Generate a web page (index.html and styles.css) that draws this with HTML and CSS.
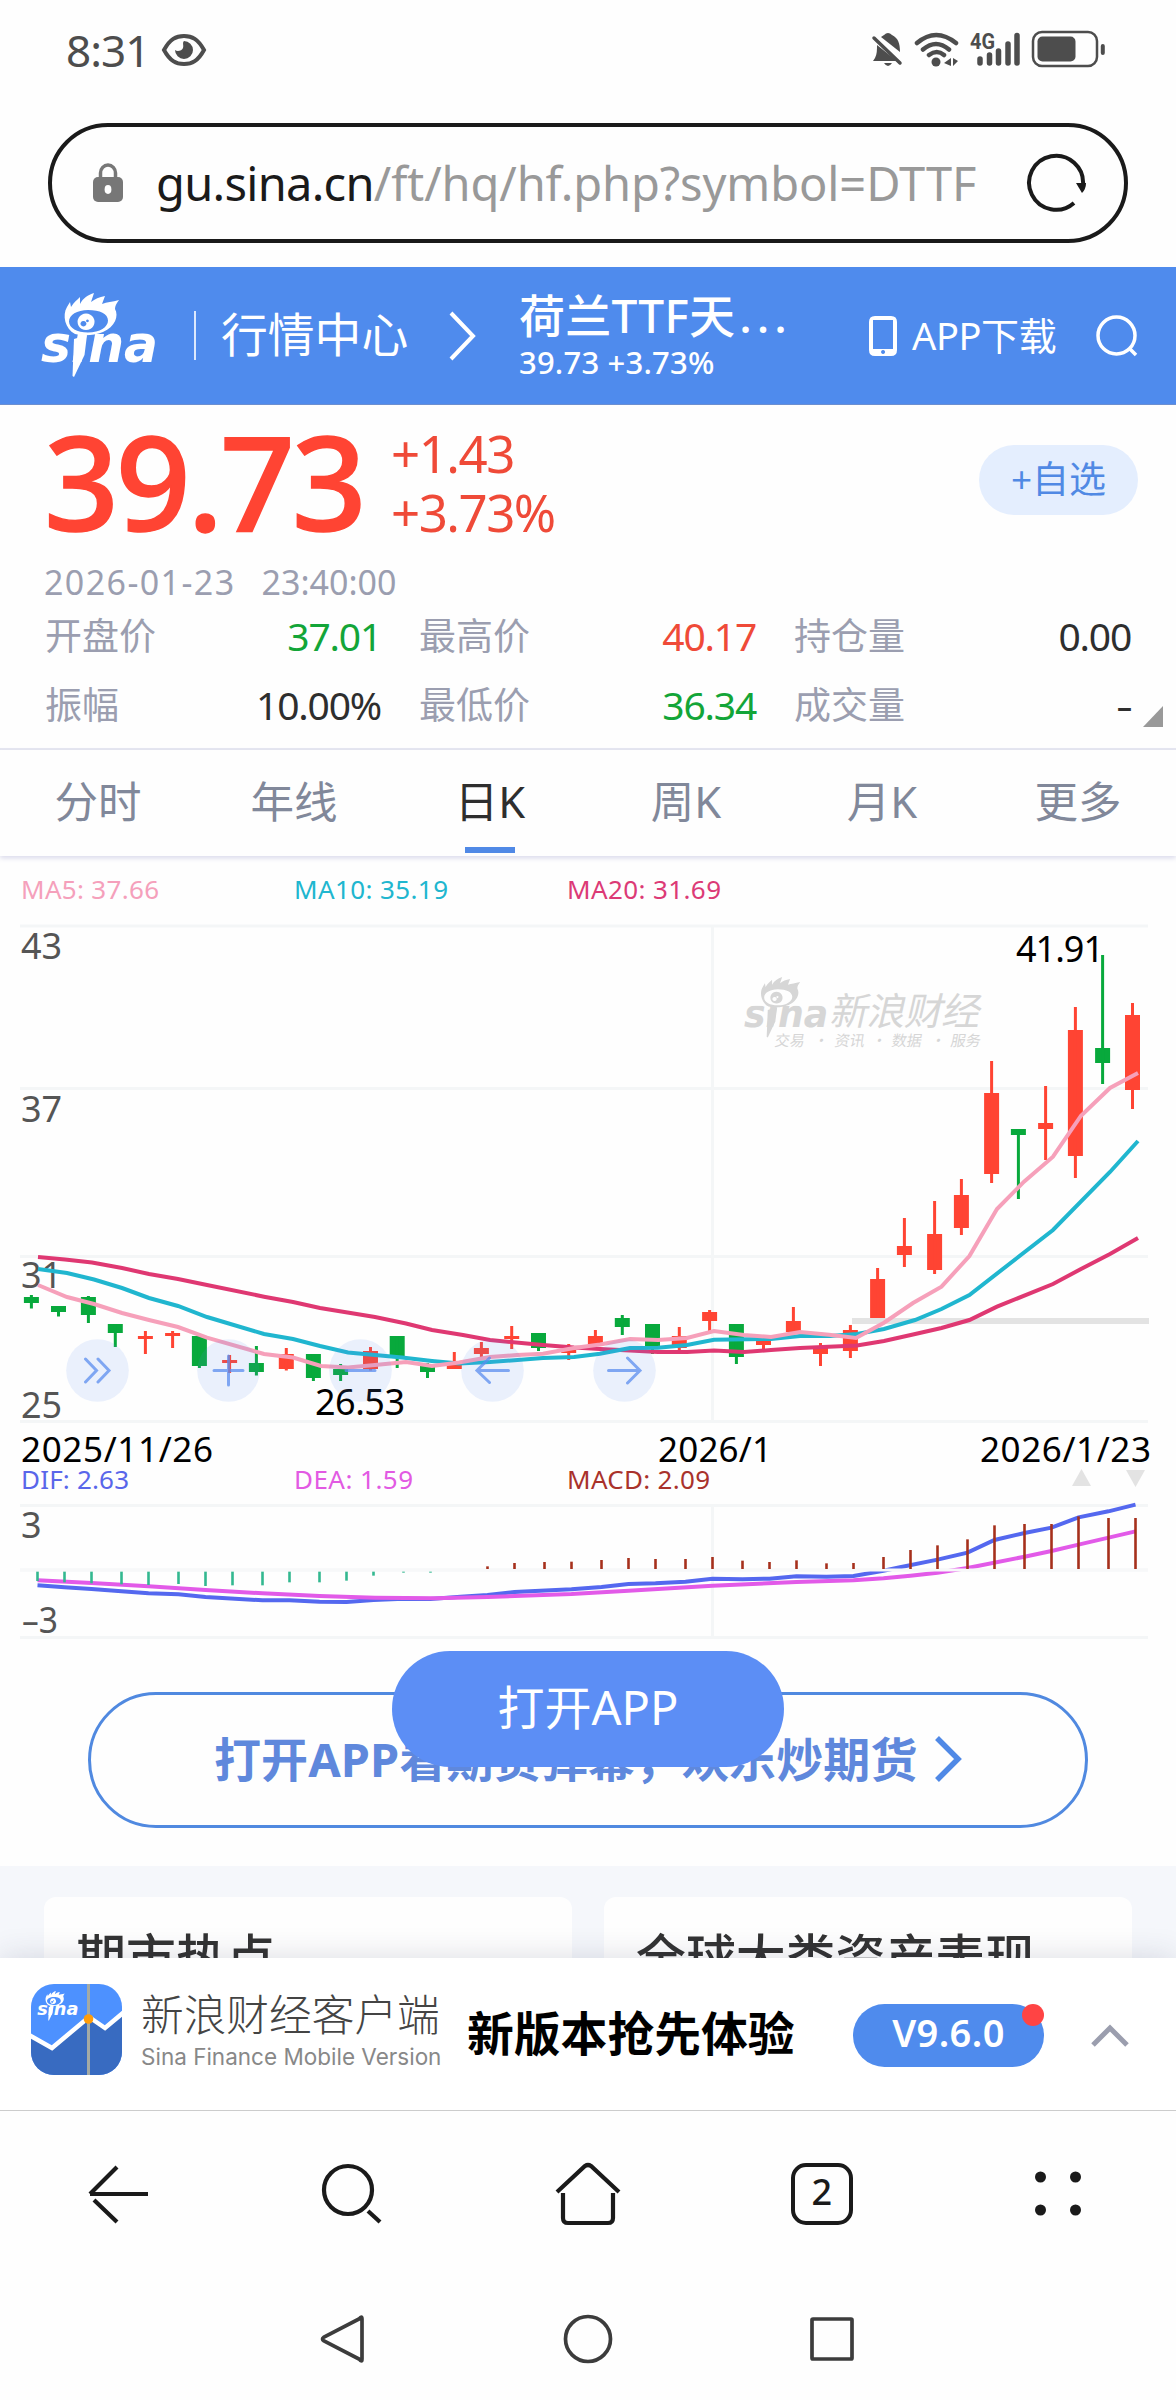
FILE: index.html
```html
<!DOCTYPE html>
<html lang="zh-CN">
<head>
<meta charset="utf-8">
<title>荷兰TTF天然气 行情</title>
<link rel="stylesheet" href="styles.css">
</head>
<body>
<svg width="0" height="0" class="defs" aria-hidden="true">
  <clipPath id="word-clip"><rect x="-4" y="40" width="126" height="45"/></clipPath>
  <symbol id="sina" viewBox="0 0 118 85">
    <path fill="currentColor" fill-rule="evenodd" d="M34 41C24 36 21 22 26 14L29 9L30 14C33 9 36 7 39 4L39 11C42 5 47 2 53 0L50 9C54 6 58 4 64 3L61 11C66 9 71 9 78 7C75 11 74 13 74 16C78 23 74 34 62 39C52 43 42 43 34 41ZM47 17C36 17 28 22 28 28.500C28 35 36 39.500 47 39.500C59 39.500 67 34 67 27.500C67 21 59 17 47 17Z"/>
    <path fill="currentColor" fill-rule="evenodd" d="M45 20.500a8.500 8.300 0 1 0 .1 0ZM42.500 28a3 2.700 0 1 1 -.1 0ZM46.500 26.500a1.400 1.400 0 1 1 -.1 0Z"/>
    <path fill="currentColor" d="M33 46L46 42L43.500 62L33 84L31.500 83Z"/>
    <g clip-path="url(#word-clip)"><text class="sina-word" x="0" y="69" textLength="117" lengthAdjust="spacingAndGlyphs" fill="currentColor">sina</text></g>
  </symbol>
</svg>

<header class="status">
  <div class="status-left">
    <span class="clock">8:31</span>
    <svg width="46" height="34" viewBox="0 0 46 34" fill="none" stroke="#4d4d4d" stroke-width="4"><path d="M3 17C9 6 15 3 23 3S37 6 43 17C37 28 31 31 23 31S9 28 3 17Z"/><path d="M23 8a9 9 0 1 1-9 9c2 2 7 1 8-2s-1-5 1-7Z" fill="#4d4d4d" stroke="none"/></svg>
  </div>
  <svg width="250" height="50" viewBox="865 25 250 50" fill="none" stroke="#4d4d4d" stroke-linecap="round">
    <path d="M884 35q4-4 8 0c6 3 8 8 8 17L881 37ZM877 45l20 16H873l2-3c2-4 2-8 2-13Z" fill="#4d4d4d" stroke="none"/>
    <path d="M874 38L900 63" stroke-width="3.500"/><path d="M884 63h8q-4 6-8 0Z" fill="#4d4d4d" stroke="none"/>
    <path d="M917 43q19-16 39 0M923 49.500q13-11 26 0M929 55q8-6 15 0" stroke-width="4.500"/><circle cx="936" cy="62" r="4.500" fill="#4d4d4d" stroke="none"/>
    <path d="M951 58v8l-7-3ZM953 58v8l5-5Z" fill="#4d4d4d" stroke="none"/>
    <path d="M980 59v4M989.500 55v8M998.500 51v12M1008 44v19M1017 35.500v27.500" stroke-width="5.500"/>
    <text class="net" x="970" y="49" textLength="25" lengthAdjust="spacingAndGlyphs">4G</text>
    <rect x="1033" y="32" width="64" height="34" rx="9" stroke-width="2.500"/><rect x="1037.500" y="36.500" width="38" height="25" rx="5" fill="#4d4d4d" stroke="none"/><path d="M1102.800 46v7" stroke-width="4"/>
  </svg>
</header>

<div class="address">
  <svg class="lock" width="30" height="40" viewBox="0 0 30 40"><path d="M7.500 16v-6a7.500 8 0 0 1 15 0v6" fill="none" stroke="#777" stroke-width="3.500"/><rect y="14" width="30" height="25" rx="5" fill="#777"/><ellipse cx="15" cy="26.500" rx="3.400" ry="4.400" fill="#fff"/></svg>
  <span class="url"><b>gu.sina.cn</b><i>/ft/hq/hf.php?symbol=DTTF</i></span>
  <svg width="62" height="62" viewBox="0 0 62 62"><path d="M48 51A27 27 0 1 1 57 33" fill="none" stroke="#1a1a1a" stroke-width="4"/><path d="M50 31h10q0 6-4 10Z" fill="#1a1a1a"/></svg>
</div>

<nav class="topbar">
  <svg class="logo" width="118" height="85"><use href="#sina"/></svg>
  <span class="bar"></span>
  <span class="center-link">行情中心</span>
  <svg class="crumb" width="28" height="50" viewBox="0 0 28 50"><path d="M3 2L25 25L3 48" fill="none" stroke="#fff" stroke-width="4"/></svg>
  <div class="name"><strong>荷兰TTF天<i>...</i></strong><span>39.73 +3.73%</span></div>
  <svg class="phone" width="28" height="40" viewBox="0 0 28 40"><path fill="#fff" fill-rule="evenodd" d="M6 0H22Q28 0 28 6V34Q28 40 22 40H6Q0 40 0 34V6Q0 0 6 0ZM4 4V33H24V4ZM14 34a2 2 0 1 0 .1 0Z"/></svg>
  <span class="download">APP下载</span>
  <svg width="42" height="42" viewBox="0 0 42 42" fill="none" stroke="#fff" stroke-width="3.500"><circle cx="20.500" cy="20.500" r="18.500"/><path d="M33 33l7 7"/></svg>
</nav>

<section class="quote">
  <div class="price-row">
    <div class="price">39.73</div>
    <div class="change"><span>+1.43</span><span>+3.73%</span></div>
    <button class="add">+自选</button>
  </div>
  <div class="time"><span>2026-01-23</span><span>23:40:00</span></div>
  <dl class="stats">
    <div><dt>开盘价</dt><dd class="down">37.01</dd></div>
    <div><dt>最高价</dt><dd class="up">40.17</dd></div>
    <div><dt>持仓量</dt><dd>0.00</dd></div>
    <div><dt>振幅</dt><dd>10.00%</dd></div>
    <div><dt>最低价</dt><dd class="down">36.34</dd></div>
    <div><dt>成交量</dt><dd class="none">-</dd></div>
  </dl>
  <span class="more-corner"></span>
</section>

<nav class="tabs"><span>分时</span><span>年线</span><span class="active">日K</span><span>周K</span><span>月K</span><span>更多</span></nav>

<svg class="chart" width="1176" height="786" viewBox="0 860 1176 786">
  <g class="legend">
    <text x="21" y="899" textLength="138" fill="#f5a0bb">MA5: 37.66</text>
    <text x="294" y="899" textLength="154" fill="#20b6cf">MA10: 35.19</text>
    <text x="567" y="899" textLength="154" fill="#dc3a76">MA20: 31.69</text>
  </g>
  <path class="grid" d="M20 926H1148M20 1088.500H1148M20 1256.500H1148M20 1421.500H1148M712.500 926V1421M20 1505.500H1148M20 1570H1148M20 1637.500H1148M712.500 1505V1637"/>
  <g class="axis"><text x="21" y="959" textLength="41">43</text><text x="21" y="1122" textLength="41">37</text><text x="21" y="1288" textLength="41">31</text><text x="21" y="1418" textLength="41">25</text><text x="21" y="1538">3</text><text x="22" y="1633" textLength="36" lengthAdjust="spacingAndGlyphs">–3</text></g>
  <g color="#d6d6d6" fill="#d6d6d6">
    <use href="#sina" x="744" y="976" width="85" height="63"/>
    <g class="wm"><text x="0" y="0" font-size="38" transform="translate(829 1025) skewX(-13)" textLength="150">新浪财经</text>
    <text font-size="15" transform="translate(774 1046) skewX(-10)"><tspan x="0">交易</tspan><tspan x="39">·</tspan><tspan x="60">资讯</tspan><tspan x="97">·</tspan><tspan x="117">数据</tspan><tspan x="156">·</tspan><tspan x="176">服务</tspan></text></g>
  </g>
  <path d="M852 1321H1149" stroke="#e3e3e3" stroke-width="6"/>
  <g id="candles"></g>
  <g class="line">
    <polyline stroke="#df3872" points="38,1257 65,1259.500 92,1262.600 122,1268 149,1274 178,1279 207,1285 264,1296.700 293,1302 320,1308 375,1317 406,1323.500 432,1330 463,1335 490,1340 543,1345 574,1347.500 600,1349 630,1350.500 658,1352 687,1352 714,1350.500 744,1352 771,1350 800,1348 857,1345.500 884,1341 913,1334.500 941.500,1328 969.400,1320 997,1306.700 1053,1284 1081,1269 1110,1254 1138,1238"/>
    <polyline stroke="#20b6cf" points="38,1269 67,1273 94,1279.500 122,1288 149,1298 178,1306 207,1317 264,1334 293,1339 320,1346 348,1352.500 375,1355 402,1357.500 432,1361 459,1363.600 490,1362 543,1358 574,1357 600,1353.700 630,1348 658,1347.700 687,1345 714,1339.700 771,1339 800,1336 830,1336 857,1334 884,1329 915,1320 941.500,1309 969.400,1295 1053,1230 1110,1172 1138,1141"/>
    <polyline stroke="#f6a0ba" points="38,1285 67,1297 94,1304 122,1313 149,1320 178,1327 207,1337.600 264,1354 293,1357.500 321,1366 348,1367.500 375,1365 406,1362 432,1366 459,1362.500 490,1357 517,1355 543,1353.700 574,1348 600,1344.500 630,1339 658,1340 687,1338 714,1331 744,1335 771,1337 800,1332 829,1334.700 856,1338 884,1322.700 913,1303 941.500,1286.700 969.400,1256 997,1209 1024,1181.700 1053,1156.700 1081,1115.700 1110,1088 1138,1073"/>
  </g>
  <g class="marks"><text x="315" y="1415" textLength="90">26.53</text><text x="1016" y="961.500" textLength="88">41.91</text></g>
  <g class="dates"><text x="21" y="1462" textLength="192">2025/11/26</text><text x="658" y="1462" textLength="114">2026/1</text><text x="980" y="1462" textLength="171">2026/1/23</text></g>
  <g fill="#5b8def" fill-opacity=".12"><circle cx="97.500" cy="1370.500" r="31.300"/><circle cx="228.500" cy="1370.500" r="31.300"/><circle cx="360.500" cy="1370.500" r="31.300"/><circle cx="492.500" cy="1370.500" r="31.300"/><circle cx="624.500" cy="1370.500" r="31.300"/></g>
  <path class="controls" d="M85.500 1359l11 11.500l-11 11.500M98 1359l11 11.500l-11 11.500M214 1370.500h29M228.500 1356v29M346 1370.500h29M508.500 1370.500H477M489.500 1358L477 1370.500L489.500 1382.500M608.500 1370.500H640M627.500 1358L640 1370.500L627.500 1383"/>
  <g class="legend">
    <text x="21" y="1489" textLength="108" fill="#5966ea">DIF: 2.63</text>
    <text x="294" y="1489" textLength="119" fill="#e25ae3">DEA: 1.59</text>
    <text x="567" y="1489" textLength="143" fill="#a9322b">MACD: 2.09</text>
  </g>
  <path fill="#e3e3e3" d="M1072 1486H1091L1081.500 1469ZM1126 1470H1145L1135.500 1487Z"/>
  <g class="line" id="macd"></g>
</svg>

<section class="promo">
  <div class="promo-link"><span>打开APP看期货弹幕，欢乐炒期货</span><svg width="28" height="46" viewBox="0 0 28 46"><path d="M3 2L24 23L3 44" fill="none" stroke="#5089e6" stroke-width="5.500"/></svg></div>
  <button class="open-app">打开APP</button>
</section>

<section class="cards"><h2>期市热点</h2><h2>全球大类资产表现</h2></section>

<aside class="banner">
  <svg class="app" width="91" height="91" viewBox="0 0 91 91">
    <defs><clipPath id="tile"><rect width="91" height="91" rx="23"/></clipPath></defs>
    <g clip-path="url(#tile)"><rect width="91" height="91" fill="#4d91ff"/><path d="M0 53L21 64L58 34L74 44L91 31V91H0Z" fill="#386bc1"/><path d="M-2 51L21 64L58 33L74 44L93 28" fill="none" stroke="#fff" stroke-width="4.500"/><path d="M57.500 0V91" stroke="#a3aaa5" stroke-width="3"/><circle cx="57.500" cy="35" r="4.800" fill="#ff9d0a"/></g>
    <use href="#sina" x="6" y="7" width="42" height="30" color="#fff"/>
  </svg>
  <div class="client"><span>新浪财经客户端</span><small>Sina Finance Mobile Version</small></div>
  <strong>新版本抢先体验</strong>
  <span class="version">V9.6.0</span>
  <svg class="expand" width="38" height="24" viewBox="0 0 38 24"><path d="M2 21L19 4L36 21" fill="none" stroke="#9b9eae" stroke-width="5"/></svg>
</aside>

<nav class="browser" aria-label="浏览器">
  <svg width="64" height="64" viewBox="0 0 64 64"><path d="M62 32H4M31 5L4 32M8 38L31 60"/></svg>
  <svg width="64" height="64" viewBox="0 0 64 64"><circle cx="28" cy="28" r="24"/><path d="M48 49L60 60"/></svg>
  <svg width="66" height="64" viewBox="1 0 66 64"><path d="M3 30L31 4q3-2 6 0L65 30M9 31V56q0 5 5 5H54q5 0 5-5V31"/></svg>
  <span class="tab-count">2</span>
  <svg width="64" height="64" viewBox="0 0 64 64"><g fill="#1a1a1a" stroke="none"><circle cx="14.500" cy="15" r="5.500"/><circle cx="49.500" cy="15" r="5.500"/><circle cx="14.500" cy="48" r="5.500"/><circle cx="49.500" cy="48" r="5.500"/></g></svg>
</nav>
<nav class="system" aria-label="系统">
  <svg width="48" height="52" viewBox="0 0 48 52"><path d="M39 6Q42 2 42 6V46Q42 50 39 46L4 28Q1 26 4 24Z"/></svg>
  <svg width="50" height="50" viewBox="0 0 50 50"><circle cx="25" cy="25" r="22.500"/></svg>
  <svg width="48" height="48" viewBox="0 0 48 48"><rect x="4" y="4" width="40" height="40" rx="1"/></svg>
</nav>
<script src="chart.js"></script>
</body>
</html>
```
FILE: styles.css
```css
* { box-sizing: border-box; }
body { margin: 0; width: 1176px; height: 2400px; overflow: hidden; display: flex; flex-direction: column; background: #fefefe; color: #333; font-family: "Noto Sans", "Noto Sans CJK SC", sans-serif; }
body > * { flex: none; }
button { border: 0; padding: 0; font: inherit; }
svg { display: block; flex: none; }
.defs { position: absolute; }
.sina-word { font: italic 700 51px "DejaVu Sans", sans-serif; }

.status { height: 123px; padding: 25px 61px 0 66px; display: flex; justify-content: space-between; align-items: flex-start; }
.status-left { display: flex; align-items: center; height: 49px; color: #4d4d4d; }
.clock { width: 95px; font-size: 44px; line-height: 60px; letter-spacing: -1px; white-space: nowrap; }
.net { font: 700 22px Roboto, sans-serif; fill: #4d4d4d; stroke: none; }

.address { margin: 0 48px; height: 120px; border: 4.500px solid #1a1a1a; border-radius: 60px; display: flex; align-items: center; padding: 0 36px 0 41px; }
.url { flex: 1; margin-left: 33px; font-size: 47px; line-height: 60px; white-space: nowrap; }
.url b { font-weight: 400; color: #1a1a1a; letter-spacing: -.7px; }
.url i { font-style: normal; color: #999; letter-spacing: -.1px; }

.topbar { margin-top: 24px; height: 138px; background: #4f8bed; color: #fff; display: flex; align-items: center; padding-left: 41px; border-bottom: 1px solid #6c8fd0; }
.bar { width: 2px; height: 49px; margin-left: 35px; background: #dce8fd; }
.center-link { width: 190px; margin-left: 25px; padding-bottom: 8px; font-size: 46.800px; white-space: nowrap; }
.crumb { margin-left: 37px; }
.name { width: 330px; margin-left: 43px; display: flex; flex-direction: column; }
.name strong { font-size: 46px; font-weight: 500; line-height: 52px; letter-spacing: .2px; white-space: nowrap; }
.name i { font-style: normal; letter-spacing: 5px; margin-left: 4px; }
.name span { font-size: 31px; line-height: 42px; font-weight: 500; letter-spacing: .2px; }
.phone { margin-left: 20px; }
.download { width: 150px; margin-left: 15px; margin-right: 34px; padding-bottom: 5px; font-size: 38px; white-space: nowrap; letter-spacing: -.4px; }

.quote { position: relative; height: 345px; border-bottom: 2px solid #e5e6f0; }
.price-row { height: 151px; display: flex; padding: 0 38px 0 44px; }
.price { width: 347px; padding-top: 1px; font-size: 131px; font-weight: 500; line-height: 148px; letter-spacing: -3.200px; color: #ff4433; -webkit-text-stroke: 1.500px #ff4433; }
.change { padding-top: 19px; flex: 1; font-size: 51px; line-height: 59px; letter-spacing: -1.500px; color: #ef4a38; display: flex; flex-direction: column; }
.add { margin-top: 40px; width: 159px; height: 70px; padding-bottom: 7px; border-radius: 35px; background: #e4eefe; color: #5089e4; font-size: 37px; }
.time { display: flex; gap: 26px; padding-left: 44px; font-size: 34px; line-height: 52px; color: #9b9eb0; }
.time span:first-child { letter-spacing: 1.400px; }
.stats { margin: 0 45px; display: grid; grid-template-columns: 336px 337px 337px; column-gap: 38px; }
.stats div { height: 69px; display: flex; justify-content: space-between; line-height: 56px; font-size: 37px; }
.stats dt { color: #9b9eb0; white-space: nowrap; }
.stats dd { margin: 0; font-size: 39px; letter-spacing: -1.200px; color: #2e2e2e; }
.stats .down { color: #13a538; }
.stats .up { color: #ef4a38; }
.stats .none { transform: scaleX(1.35); transform-origin: right; }
.more-corner { position: absolute; right: 13px; bottom: 21px; border-left: 20px solid transparent; border-bottom: 21px solid #999; }

.tabs { height: 106px; display: grid; grid-template-columns: repeat(6, 196px); justify-items: center; font-size: 43.500px; line-height: 102px; color: #81889a; box-shadow: 0 2px 5px #d8d8ea; z-index: 1; background: #fefefe; }
.active { position: relative; color: #2e2e2e; }
.active::after { content: ""; position: absolute; left: calc(50% - 25px); bottom: 3px; width: 50px; height: 6px; background: #5089e6; }

.chart { margin-top: 4px; }
.legend { font-size: 26px; }
.grid { fill: none; stroke: #f4f6f7; stroke-width: 3; }
.axis { font-size: 36px; fill: #555; }
.marks { font-size: 36px; fill: #000; }
.dates { font-size: 35px; fill: #000; }
.wm { font-family: "Noto Sans CJK SC", sans-serif; }
.line { fill: none; stroke-width: 4; }
.controls { fill: none; stroke: #5b8def; stroke-opacity: .75; stroke-width: 3; stroke-linecap: round; }
.down-candle { fill: #08a93c; }
.up-candle { fill: #ff4433; }

.promo { position: relative; height: 220px; padding: 46px 88px 0; }
.promo-link { height: 136px; border: 3px solid #5089e0; border-radius: 68px; display: flex; align-items: center; padding: 0 0 3px 123px; font-size: 47px; font-weight: 700; color: #5f88dc; white-space: nowrap; }
.promo-link span { width: 706px; padding-bottom: 4px; letter-spacing: .1px; }
.promo-link svg { margin-left: 14px; }
.open-app { position: absolute; left: 392px; top: 5px; width: 392px; height: 116px; padding-bottom: 10px; border-radius: 58px; background: #5c8ef5; color: #fff; font-size: 47px; font-weight: 400; }

.cards { height: 92px; padding: 31px 44px 0; background: #f5f7fb; display: grid; grid-template-columns: 528px 528px; gap: 32px; overflow: hidden; }
.cards h2 { height: 110px; margin: 0; padding: 26px 32px; border-radius: 12px; background: #fefefe; font-size: 49.900px; line-height: 68px; font-weight: 500; white-space: nowrap; }

.banner { height: 152px; background: #fff; display: flex; align-items: flex-start; padding: 26px 0 0 31px; box-shadow: 0 0 30px rgba(40, 45, 80, .16); clip-path: inset(-60px 0 0 0); z-index: 1; }
.client { width: 308px; margin-left: 19px; display: flex; flex-direction: column; white-space: nowrap; font-family: Inter, "Noto Sans CJK SC", sans-serif; }
.client span { font-size: 42.700px; line-height: 64px; font-weight: 300; color: #444; }
.client small { font-size: 22.500px; line-height: 20px; color: #888; margin-top: -1px; }
.banner strong { width: 330px; margin-left: 18px; font-size: 46.800px; line-height: 98px; color: #000; white-space: nowrap; }
.version { position: relative; width: 191px; height: 63px; margin: 20px 0 0 56px; border-radius: 32px; background: #4f8bed; color: #fff; text-align: center; font-size: 38px; line-height: 57px; font-weight: 600; letter-spacing: .4px; }
.version::after { content: ""; position: absolute; right: 0; top: 0; width: 22px; height: 22px; border-radius: 50%; background: #ff4444; }
.expand { margin: 40px 0 0 47px; }

.browser { height: 170px; border-top: 1.500px solid #ccc; padding: 0 86px 3px; display: flex; justify-content: space-between; align-items: center; }
.browser svg { fill: none; stroke: #1a1a1a; stroke-width: 4.200; }
.tab-count { width: 62px; height: 62px; margin-right: 3px; border: 4.300px solid #1a1a1a; border-radius: 15px; text-align: center; font-size: 36px; line-height: 50px; font-weight: 500; color: #1a1a1a; }
.system { height: 118px; padding: 0 320px; display: flex; justify-content: space-between; align-items: center; }
.system svg { fill: none; stroke: #3c3c3c; stroke-width: 3.700; }
```
FILE: chart.js
```js
// [x, body top, body bottom, wick top, wick bottom, rising]
const candles = [
  [31.4,1297,1303,1295,1308.5,0],[58.5,1306,1312,1306,1316.5,0],[88.4,1297,1315,1296,1323,0],[115.3,1324,1333,1324,1347,0],
  [145.4,1336,1339,1331,1354,1],[172.6,1333,1336,1331,1348,1],[199.4,1336,1366,1336,1368,0],[229.6,1360,1363,1355,1373,1],
  [256.4,1363,1372,1346,1375.5,0],[286.3,1354,1369,1348,1370.5,1],[313.4,1354,1378,1354,1381,0],[340.6,1369,1375,1364,1381,0],
  [370.5,1351,1369,1347,1370.5,1],[397.2,1336,1357,1336,1368,0],[427.5,1366,1372,1363,1378,0],[454.3,1365,1369,1352,1369,1],
  [481.4,1348,1354,1342,1357,1],[511.7,1336,1339,1326,1349,1],[538.5,1333,1348,1333,1351,0],[568.7,1350,1353,1344,1360,1],
  [595.4,1336,1345,1330,1345,1],[622.3,1318,1327,1315,1335,0],[652.5,1324,1348,1324,1354,0],[679.3,1336,1348,1327,1351,1],
  [709.6,1312,1321,1310,1332,1],[736.4,1324,1357,1324,1364,0],[763.5,1339,1345,1335,1351,1],[793.4,1321,1332,1307,1332,1],
  [820.5,1348,1354,1343,1366,1],[850.4,1330,1351,1325,1358,1],[877.6,1279,1318,1268,1318,1],[904.4,1246,1255,1218,1267,1],
  [934.6,1234,1270,1201,1274,1],[961.4,1195,1228,1179,1235,1],[991.6,1093,1174,1061,1183,1],[1018.4,1129,1135,1129,1199,0],
  [1045.6,1123,1129,1086,1160,1],[1075.4,1030,1156,1007,1178,1],[1102.6,1048,1063,955,1084,0],[1132.5,1015,1090,1003,1109,1]
];
document.getElementById("candles").innerHTML = candles.map(([x, top, bottom, high, low, up]) =>
  `<g class="${up ? "up" : "down"}-candle"><rect x="${x - 7.5}" y="${top}" width="15" height="${bottom - top}"/>` +
  `<rect x="${x - 1.5}" y="${high}" width="3" height="${low - high}"/></g>`).join("");

// MACD values are stored on a 4/3 by 3 grid
const px = x => x * 0.75;
const py = y => 1430 + y / 3;
const xs = [50,86,122,162,198,238,274,310,350,386,426,462,498,538,574,614,650,686,726,762,802,838,874,914,950,990,1026,1062,1102,1138,1178,1214,1250,1290,1326,1366,1402,1438,1478,1514];
const ends = [453,457,460,463,465,462,468,466,466,457,457,452,437,428,428,425,409,399,396,395,390,384,387,387,381,392,396,391,400,399,381,360,346,328,286,282,282,259,264,264];
const dif = [[50,466],[86,472],[122,477],[162,484],[198,490],[238,493],[274,501],[350,511],[386,511],[426,515],[462,516],[498,510],[538,506],[574,507],[614,500],[650,495],[686,486],[762,478],[802,471],[838,462],[874,460],[914,455],[950,446],[990,448],[1026,446],[1062,439],[1102,440],[1138,438],[1178,422],[1200,412],[1250,389],[1290,368],[1326,330],[1366,309],[1402,293],[1438,262],[1478,244],[1514,224]];
const dea = [[50,451],[122,459],[198,469],[274,480],[350,490],[426,498],[500,503],[580,505],[650,501],[762,492],[838,482],[950,467],[1062,456],[1138,451],[1178,445],[1214,437],[1250,428],[1290,414],[1366,380],[1402,363],[1438,344],[1514,304]];
const poly = (pts, color) => `<polyline stroke="${color}" points="${pts.map(([x, y]) => px(x) + "," + py(y)).join(" ")}"/>`;
const bars = xs.map((x, i) => `<path stroke-width="2.6" stroke="${i < 16 ? "#33b890" : "#a6301c"}" d="M${px(x)} ${py(i < 16 ? 425 : 417)}V${py(ends[i])}"/>`).join("");
document.getElementById("macd").innerHTML = poly(dif, "#5468ef") + poly(dea, "#e25ae8") +
  '<path d="M20 1570H1148" stroke="#f7f8f9" stroke-width="3"/>' + bars;
```
